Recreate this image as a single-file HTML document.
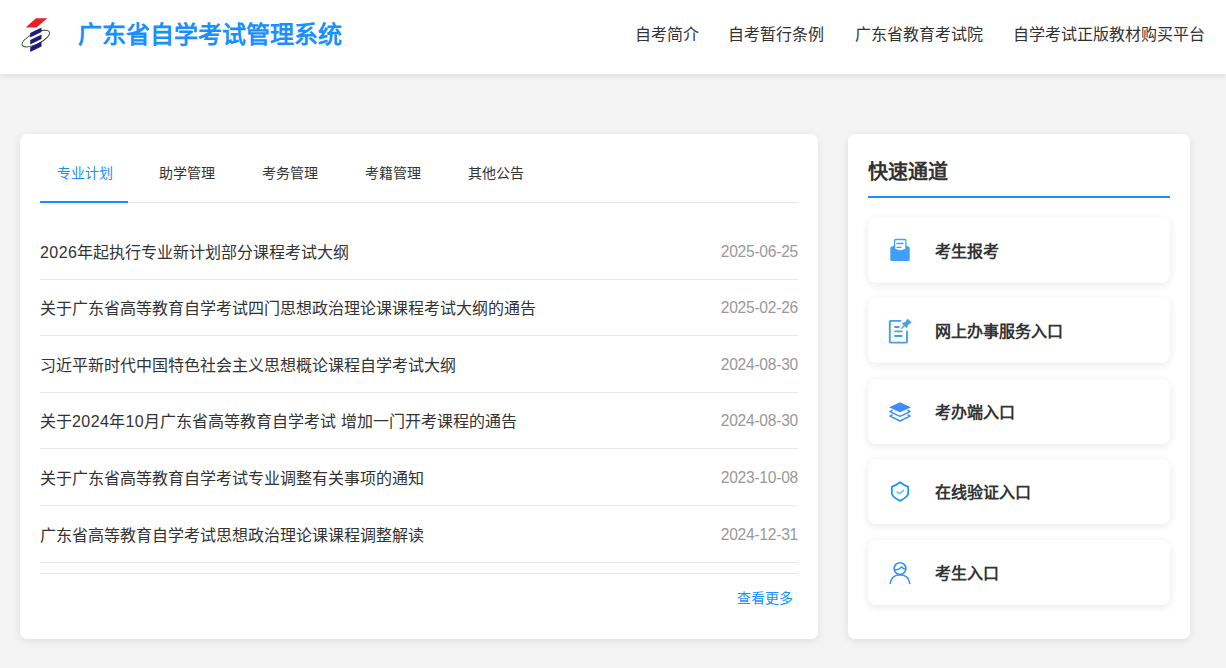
<!DOCTYPE html>
<html lang="zh-CN">
<head>
<meta charset="utf-8">
<style>
*{margin:0;padding:0;box-sizing:border-box;}
html,body{width:1226px;height:668px;overflow:hidden;background:#f4f4f4;font-family:"Liberation Sans",sans-serif;color:#333;}
.header{position:absolute;left:0;top:0;width:1226px;height:74px;background:#fff;box-shadow:0 2px 6px rgba(0,0,0,0.1);z-index:2;}
.logo{position:absolute;left:18px;top:14px;width:40px;height:42px;}
.title{position:absolute;left:78px;top:18px;font-size:24px;font-weight:bold;color:#1890ff;line-height:34px;white-space:nowrap;}
.nav{position:absolute;top:23px;font-size:16px;color:#333;line-height:24px;white-space:nowrap;}
.card{position:absolute;background:#fff;border-radius:7px;box-shadow:0 2px 8px rgba(0,0,0,0.09);}
.left{left:20px;top:134px;width:798px;height:505px;}
.right{left:848px;top:134px;width:342px;height:505px;}
.tabs{position:absolute;left:20px;top:0;width:758px;height:69px;border-bottom:1px solid #e5e5e5;}
.tab{position:absolute;top:29px;font-size:14px;line-height:20px;color:#333;white-space:nowrap;}
.tab.active{color:#1890ff;}
.tabline{position:absolute;left:0;top:67px;width:88px;height:2px;background:#1890ff;}
.item{position:absolute;left:20px;width:758px;height:57px;border-bottom:1px solid #e8e8e8;}
.item .t{position:absolute;left:0;top:19px;font-size:16px;line-height:22px;color:#333;white-space:nowrap;}
.item .d{position:absolute;right:0;top:18px;font-size:15.6px;letter-spacing:-0.25px;line-height:22px;color:#999;white-space:nowrap;}
.n{letter-spacing:0.45px;}
.more{position:absolute;right:25px;top:454px;font-size:14px;line-height:20px;color:#1890ff;}
.sep2{position:absolute;left:20px;top:439px;width:758px;height:1px;background:#e8e8e8;}
.qt{position:absolute;left:20px;top:24px;font-size:20px;font-weight:bold;color:#333;line-height:28px;}
.qline{position:absolute;left:20px;top:62px;width:302px;height:2px;background:#1890ff;}
.q{position:absolute;left:20px;width:302px;height:65px;background:#fff;border-radius:8px;box-shadow:0 2px 8px rgba(0,0,0,0.09);}
.q .ic{position:absolute;left:12px;top:12px;width:40px;height:40px;}
.q .l{position:absolute;left:67px;top:23px;font-size:16px;font-weight:bold;line-height:22px;color:#333;white-space:nowrap;}
</style>
</head>
<body>
<div class="header">
  <svg class="logo" viewBox="14 12 46 46" style="left:14px;top:12px;width:46px;height:46px">
    <polygon points="36,18.2 47.3,18.2 36.5,27.6 25.7,27.6" fill="#ee1c25"/>
    <ellipse cx="35.85" cy="38.6" rx="15.1" ry="5.6" transform="rotate(-26.4 35.85 38.6)" fill="none" stroke="#2f4a14" stroke-width="0.9"/>
    <polygon points="30.2,33 41.5,27.5 41.5,32 30.2,37.5" fill="#1f1f7a"/>
    <polygon points="30.2,39.9 41.5,34.4 41.5,39.1 30.2,44.5" fill="#1f1f7a"/>
    <polygon points="30.2,47.2 41.5,41.6 41.5,46.4 30.2,52" fill="#1f1f7a"/>
  </svg>
  <div class="title">广东省自学考试管理系统</div>
  <div class="nav" style="left:635px">自考简介</div>
  <div class="nav" style="left:728px">自考暂行条例</div>
  <div class="nav" style="left:855px">广东省教育考试院</div>
  <div class="nav" style="left:1013px">自学考试正版教材购买平台</div>
</div>

<div class="card left">
  <div class="tabs">
    <div class="tab active" style="left:17px">专业计划</div>
    <div class="tab" style="left:119px">助学管理</div>
    <div class="tab" style="left:222px">考务管理</div>
    <div class="tab" style="left:325px">考籍管理</div>
    <div class="tab" style="left:428px">其他公告</div>
    <div class="tabline"></div>
  </div>
  <div class="item" style="top:89px"><span class="t"><span class="n">2026</span>年起执行专业新计划部分课程考试大纲</span><span class="d">2025-06-25</span></div>
  <div class="item" style="top:145px"><span class="t">关于广东省高等教育自学考试四门思想政治理论课课程考试大纲的通告</span><span class="d">2025-02-26</span></div>
  <div class="item" style="top:202px"><span class="t">习近平新时代中国特色社会主义思想概论课程自学考试大纲</span><span class="d">2024-08-30</span></div>
  <div class="item" style="top:258px"><span class="t">关于<span class="n">2024</span>年<span class="n">10</span>月广东省高等教育自学考试<span class="n"> </span>增加一门开考课程的通告</span><span class="d">2024-08-30</span></div>
  <div class="item" style="top:315px"><span class="t">关于广东省高等教育自学考试专业调整有关事项的通知</span><span class="d">2023-10-08</span></div>
  <div class="item" style="top:372px"><span class="t">广东省高等教育自学考试思想政治理论课课程调整解读</span><span class="d">2024-12-31</span></div>
  <div class="sep2"></div>
  <div class="more">查看更多</div>
</div>

<div class="card right">
  <div class="qt">快速通道</div>
  <div class="qline"></div>
  <div class="q" style="top:84px"><svg class="ic" viewBox="0 0 40 40"><path d="M10.3,18.2 Q10.3,17.2 11.2,16.8 L14.2,15.6 L25.8,15.6 L28.8,16.8 Q29.7,17.2 29.7,18.2 L29.7,29.9 Q29.7,30.9 28.7,30.9 L11.3,30.9 Q10.3,30.9 10.3,29.9 Z" fill="#409eff"/><path d="M14.6,10.5 Q14.6,9.5 15.6,9.5 L24.9,9.5 Q25.9,9.5 25.9,10.5 L25.9,19.3 L20.2,21.2 L14.6,19.3 Z" fill="#fff" stroke="#409eff" stroke-width="1.3" stroke-linejoin="round"/><path d="M17,13.5 L23,13.5 M17,17.3 L21,17.3" stroke="#409eff" stroke-width="1.3" stroke-linecap="round"/></svg><span class="l">考生报考</span></div>
  <div class="q" style="top:164px"><svg class="ic" viewBox="0 0 40 40"><path d="M20.5,10.9 L10.6,10.9 Q9.8,10.9 9.8,11.7 L9.8,31.8 Q9.8,32.6 10.6,32.6 L26.2,32.6 Q27,32.6 27,31.8 L27,21.4" fill="none" stroke="#4a9fe2" stroke-width="1.9" stroke-linecap="round"/><path d="M15,17 L18.8,17 M15,21.3 L21.8,21.3 M15,26 L21.8,26" stroke="#4a9fe2" stroke-width="1.8" stroke-linecap="round"/><path d="M27.6,8.9 L31.4,12.5 L28.2,14.4 L26.8,18 L21.9,13.4 L25.5,12 Z" fill="#4a9fe2" stroke="#4a9fe2" stroke-width="0.5" stroke-linejoin="round"/><path d="M24.2,15.8 L21.8,18.2" stroke="#4a9fe2" stroke-width="1.3" stroke-linecap="round"/></svg><span class="l">网上办事服务入口</span></div>
  <div class="q" style="top:245px"><svg class="ic" viewBox="0 -0.8 40 40"><path d="M12,18.6 L9.9,19.8 L20,24.6 L30.1,19.8 L28,18.6 M12,23.1 L9.9,24.3 L20,29.2 L30.1,24.3 L28,23.1" fill="none" stroke="#3d8cf6" stroke-width="1.5" stroke-linejoin="round" stroke-linecap="round"/><path d="M20,10.4 L30.4,15.1 Q31,15.4 30.4,15.7 L20,20.4 L9.6,15.7 Q9,15.4 9.6,15.1 Z" fill="#3d8cf6"/></svg><span class="l">考办端入口</span></div>
  <div class="q" style="top:325px"><svg class="ic" viewBox="0 0 40 40"><path d="M20,11.3 Q24,14.4 28.2,15.8 L28.2,22.5 Q28.2,25.5 20,29.9 Q11.8,25.5 11.8,22.5 L11.8,15.8 Q16,14.4 20,11.3 Z" fill="none" stroke="#1b98ef" stroke-width="1.8" stroke-linejoin="round"/><path d="M17.4,21 L19.5,22.6 L23.6,19.3" fill="none" stroke="#6cc3f2" stroke-width="1.6" stroke-linecap="round" stroke-linejoin="round"/></svg><span class="l">在线验证入口</span></div>
  <div class="q" style="top:406px"><svg class="ic" viewBox="0 0 40 40"><circle cx="20" cy="16.6" r="5.9" fill="none" stroke="#2f90f6" stroke-width="1.6"/><path d="M14.5,17.9 Q18.5,18.1 21.6,14.9 Q23.6,17 25.5,17.1" fill="none" stroke="#2f90f6" stroke-width="1.5"/><path d="M10.2,31.4 Q11.5,22.8 20,22.7 Q28.5,22.8 29.8,31.4" fill="none" stroke="#2f90f6" stroke-width="1.6" stroke-linecap="round"/></svg><span class="l">考生入口</span></div>
</div>
</body>
</html>
